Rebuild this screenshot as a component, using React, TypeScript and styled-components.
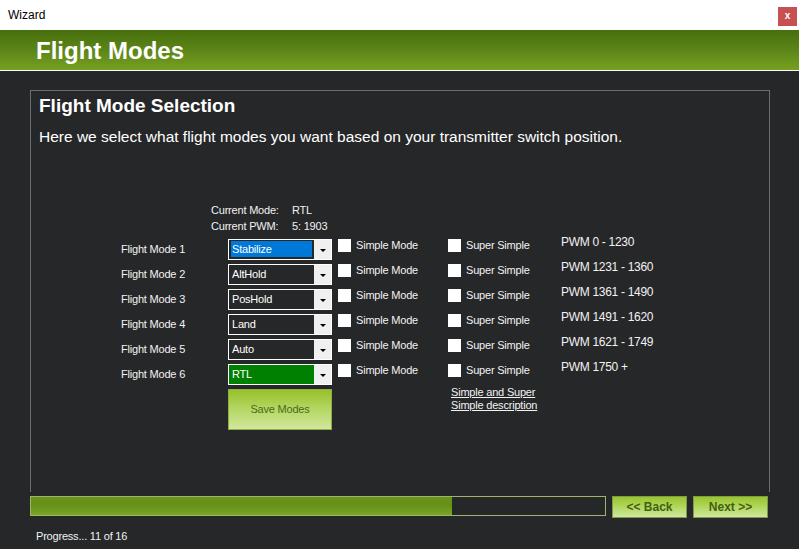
import React from "react";
import styled, { createGlobalStyle } from "styled-components";

const Global = createGlobalStyle`
  html, body { margin: 0; padding: 0; }
  body {
    width: 799px;
    height: 549px;
    overflow: hidden;
    background: #262729;
    font-family: "Liberation Sans", Arial, sans-serif;
  }
`;

const Window = styled.div`
  width: 799px;
  height: 549px;
  display: flex;
  flex-direction: column;
  background: #262729;
  overflow: hidden;
`;

const TitleBar = styled.div`
  height: 30px;
  flex: none;
  background: #ffffff;
  display: flex;
  align-items: flex-start;
  justify-content: space-between;
  padding: 0 2px 0 8px;
`;

const TitleText = styled.span`
  font-size: 12px;
  line-height: 14px;
  margin-top: 8px;
  color: #000;
`;

const CloseButton = styled.div`
  width: 19px;
  height: 19px;
  margin-top: 7px;
  background: #c75050;
  color: #fff;
  font-size: 10px;
  font-weight: bold;
  display: flex;
  align-items: center;
  justify-content: center;
  line-height: 1;
  padding-bottom: 1px;
  box-sizing: border-box;
`;

const Header = styled.div`
  height: 40px;
  flex: none;
  background: linear-gradient(to bottom, #466f0d 0%, #5c8518 50%, #76a021 100%);
  border-bottom: 1px solid #ffffff;
  display: flex;
  align-items: center;
  padding-left: 36px;
`;

const HeaderTitle = styled.h1`
  margin: 0;
  font-size: 24px;
  font-weight: bold;
  color: #ffffff;
  line-height: 28px;
  margin-top: 1px;
`;

const Body = styled.div`
  flex: 1;
  display: flex;
  flex-direction: column;
  padding: 19px 0 0 30px;
`;

const Panel = styled.div`
  width: 740px;
  height: 402px;
  box-sizing: border-box;
  border: 1px solid #6c6c6c;
  border-bottom: none;
  padding: 4px 0 0 8px;
  color: #f2f2f2;
`;

const PanelTitle = styled.h2`
  margin: 0;
  font-size: 19px;
  line-height: 22px;
  font-weight: bold;
  color: #ffffff;
`;

const PanelSubtitle = styled.p`
  margin: 10px 0 0 0;
  font-size: 15.5px;
  line-height: 19px;
  color: #ffffff;
`;

const Form = styled.div`
  margin: 56px 0 0 82px;
  font-size: 11px;
  letter-spacing: -0.2px;
  color: #f2f2f2;
`;

const InfoGrid = styled.div`
  display: grid;
  grid-template-columns: 81px auto;
  margin-left: 90px;
  line-height: 16px;
  margin-bottom: 5px;
`;

const ModeGrid = styled.div`
  display: grid;
  grid-template-columns: 107px 110px 110px 113px auto;
  grid-auto-rows: 25px;
  align-items: start;
`;

const RowLabel = styled.div`
  line-height: 21px;
`;

const Combo = styled.div<{ $bg?: string }>`
  width: 104px;
  height: 21px;
  box-sizing: border-box;
  border: 1px solid #ffffff;
  background: ${(p) => p.$bg ?? "#262729"};
  display: flex;
`;

const ComboValue = styled.div<{ $selected?: boolean }>`
  flex: 1;
  margin: 1px 2px 2px 2px;
  padding-left: 1px;
  line-height: 16px;
  color: #ffffff;
  background: ${(p) => (p.$selected ? "#0078d7" : "transparent")};
`;

const ComboButton = styled.div`
  width: 17px;
  background: #f0f0f0;
  display: flex;
  align-items: center;
  justify-content: center;
`;

const Arrow = styled.div`
  width: 0;
  height: 0;
  border-left: 3px solid transparent;
  border-right: 3px solid transparent;
  border-top: 3px solid #000;
  margin-top: 1px;
`;

const Check = styled.label`
  display: flex;
  align-items: center;
  gap: 5px;
  line-height: 13px;
  color: #f2f2f2;
`;

const Box = styled.span`
  width: 13px;
  height: 13px;
  background: #ffffff;
  flex: none;
`;

const PwmLabel = styled.div`
  margin-top: -3px;
  line-height: 13px;
  font-size: 12px;
  letter-spacing: -0.3px;
  color: #f2f2f2;
`;

const SaveButton = styled.div`
  grid-column: 2;
  width: 104px;
  height: 41px;
  box-sizing: border-box;
  border: 1px solid #8fae45;
  background: linear-gradient(to bottom, #98c12a 0%, #b5d765 50%, #d1e79c 100%);
  color: #4b6a1c;
  display: flex;
  align-items: center;
  justify-content: center;
  padding-bottom: 1px;
`;

const HelpLink = styled.a`
  grid-column: 4;
  margin: -3px 0 0 3px;
  line-height: 13px;
  color: #f2f2f2;
  text-decoration: underline;
  white-space: pre-line;
`;

const Footer = styled.div`
  display: flex;
  align-items: flex-start;
  margin-top: 4px;
  gap: 6px;
`;

const ProgressTrack = styled.div`
  width: 576px;
  height: 20px;
  box-sizing: border-box;
  border: 1px solid #9bb66a;
  background: #262729;
`;

const ProgressFill = styled.div`
  height: 100%;
  background: linear-gradient(to bottom, #6a921d 0%, #679017 45%, #7aa527 100%);
`;

const NavButton = styled.div`
  width: 75px;
  height: 22px;
  box-sizing: border-box;
  border: 1px solid #7f9a48;
  background: linear-gradient(to bottom, #98c52c 0%, #b2d75e 50%, #cfe6a0 100%);
  color: #445f12;
  font-size: 12px;
  font-weight: bold;
  display: flex;
  align-items: center;
  justify-content: center;
`;

const ProgressText = styled.div`
  margin: 11px 0 0 6px;
  font-size: 11px;
  line-height: 14px;
  letter-spacing: -0.2px;
  color: #f2f2f2;
`;

const modes = [
  { name: "Stabilize", pwm: "PWM 0 - 1230", selected: true },
  { name: "AltHold", pwm: "PWM 1231 - 1360" },
  { name: "PosHold", pwm: "PWM 1361 - 1490" },
  { name: "Land", pwm: "PWM 1491 - 1620" },
  { name: "Auto", pwm: "PWM 1621 - 1749" },
  { name: "RTL", pwm: "PWM 1750 +", bg: "#008000" },
];

export default function App() {
  const progress = (11 / 15) * 100;
  return (
    <>
      <Global />
      <Window>
        <TitleBar>
          <TitleText>Wizard</TitleText>
          <CloseButton>x</CloseButton>
        </TitleBar>
        <Header>
          <HeaderTitle>Flight Modes</HeaderTitle>
        </Header>
        <Body>
          <Panel>
            <PanelTitle>Flight Mode Selection</PanelTitle>
            <PanelSubtitle>
              Here we select what flight modes you want based on your transmitter switch position.
            </PanelSubtitle>
            <Form>
              <InfoGrid>
                <span>Current Mode:</span>
                <span>RTL</span>
                <span>Current PWM:</span>
                <span>5: 1903</span>
              </InfoGrid>
              <ModeGrid>
                {modes.map((m, i) => (
                  <React.Fragment key={m.name}>
                    <RowLabel>Flight Mode {i + 1}</RowLabel>
                    <Combo $bg={m.bg}>
                      <ComboValue $selected={m.selected}>{m.name}</ComboValue>
                      <ComboButton>
                        <Arrow />
                      </ComboButton>
                    </Combo>
                    <Check>
                      <Box />
                      Simple Mode
                    </Check>
                    <Check>
                      <Box />
                      Super Simple
                    </Check>
                    <PwmLabel>{m.pwm}</PwmLabel>
                  </React.Fragment>
                ))}
                <SaveButton>Save Modes</SaveButton>
                <HelpLink href="#">{"Simple and Super \nSimple description"}</HelpLink>
              </ModeGrid>
            </Form>
          </Panel>
          <Footer>
            <ProgressTrack>
              <ProgressFill style={{ width: `${progress}%` }} />
            </ProgressTrack>
            <NavButton>&lt;&lt; Back</NavButton>
            <NavButton>Next &gt;&gt;</NavButton>
          </Footer>
          <ProgressText>Progress... 11 of 16</ProgressText>
        </Body>
      </Window>
    </>
  );
}
